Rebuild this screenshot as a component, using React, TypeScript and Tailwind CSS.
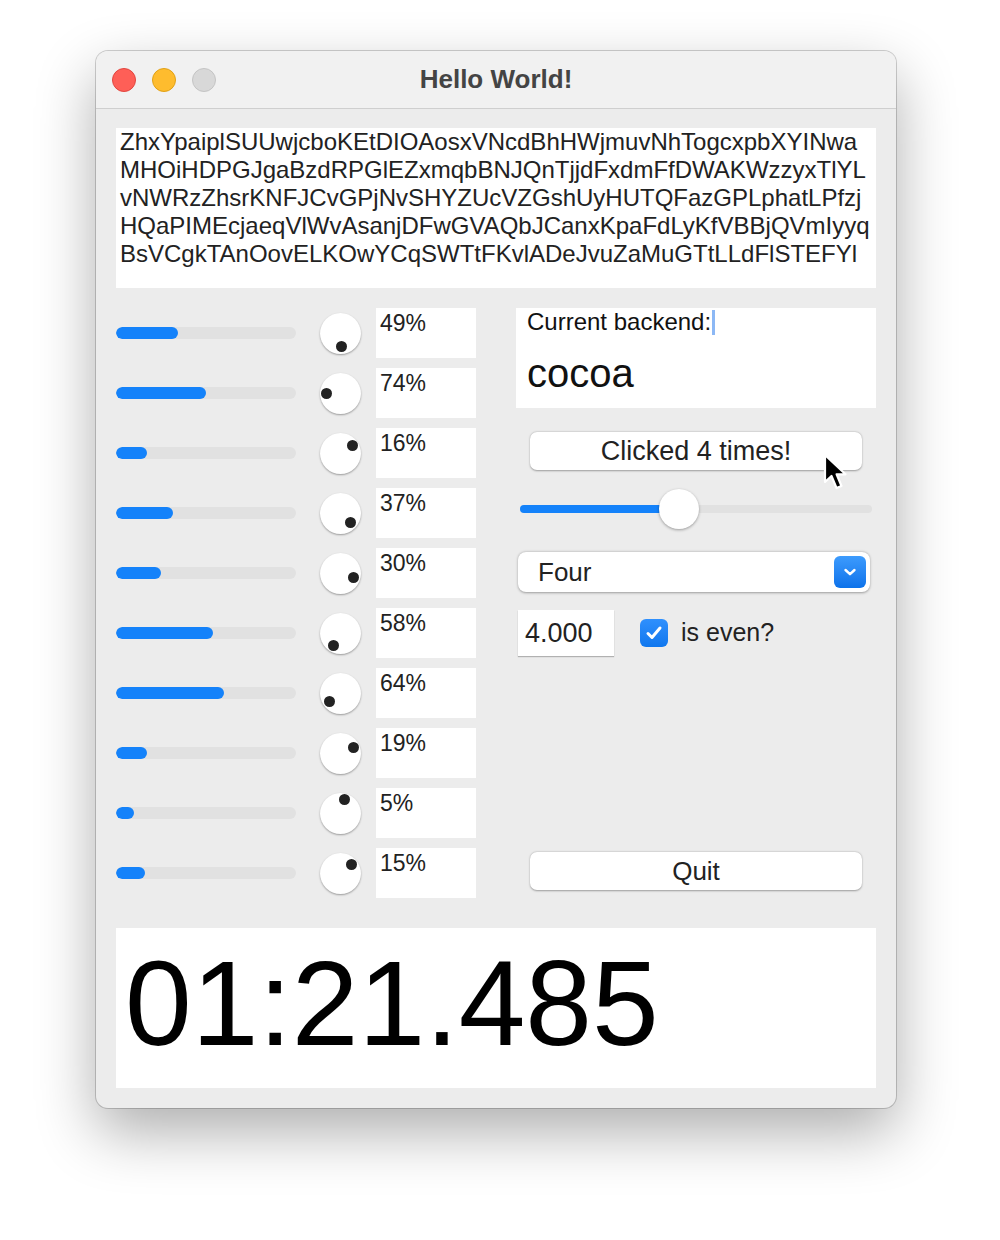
import React from 'react';

const font = { fontFamily: '"Liberation Sans", Arial, Helvetica, sans-serif' };

const rows = [
  { pct: 49, fill: 62 },
  { pct: 74, fill: 90 },
  { pct: 16, fill: 31 },
  { pct: 37, fill: 57 },
  { pct: 30, fill: 45 },
  { pct: 58, fill: 97 },
  { pct: 64, fill: 108 },
  { pct: 19, fill: 31 },
  { pct: 5, fill: 18 },
  { pct: 15, fill: 29 },
];

const lines = [
  'ZhxYpaiplSUUwjcboKEtDIOAosxVNcdBhHWjmuvNhTogcxpbXYINwa',
  'MHOiHDPGJgaBzdRPGlEZxmqbBNJQnTjjdFxdmFfDWAKWzzyxTlYL',
  'vNWRzZhsrKNFJCvGPjNvSHYZUcVZGshUyHUTQFazGPLphatLPfzj',
  'HQaPIMEcjaeqVlWvAsanjDFwGVAQbJCanxKpaFdLyKfVBBjQVmIyyq',
  'BsVCgkTAnOovELKOwYCqSWTtFKvlADeJvuZaMuGTtLLdFlSTEFYl',
];

function Knob({ pct }: { pct: number }) {
  const a = (pct / 100) * Math.PI * 2;
  const x = 20.5 + Math.sin(a) * 14;
  const y = 20.5 - Math.cos(a) * 14;
  return (
    <div className="relative w-[41px] h-[41px] rounded-full bg-white shadow-[0_1px_2px_rgba(0,0,0,0.35)] shrink-0">
      <div
        className="absolute w-[11px] h-[11px] rounded-full bg-[#222]"
        style={{ left: x - 5.5, top: y - 5.5 }}
      />
    </div>
  );
}

function Row({ pct, fill }: { pct: number; fill: number }) {
  return (
    <div className="flex items-center h-[50px]">
      <div className="w-[180px] h-[12px] rounded-full bg-[#e1e1e1] overflow-hidden">
        <div className="h-full rounded-full bg-[#1482fa]" style={{ width: fill }} />
      </div>
      <div className="ml-[24px]">
        <Knob pct={pct} />
      </div>
      <div className="ml-[15px] w-[100px] h-[50px] bg-white pl-[4px] pt-[2px] text-[23px] leading-[26px] text-[#222]">
        {pct}%
      </div>
    </div>
  );
}

function Cursor() {
  return (
    <svg
      className="absolute left-[293px] top-[21px]"
      width="28"
      height="40"
      viewBox="0 0 28 40"
    >
      <path
        d="M2 2 L2 29 L8.5 23 L13.5 35 L18.5 33 L13.6 21.3 L22.5 21.3 Z"
        fill="#000"
        stroke="#fff"
        strokeWidth="2.2"
        strokeLinejoin="round"
      />
    </svg>
  );
}

export default function App() {
  return (
    <div className="min-h-[1240px] bg-white pt-[51px] pl-[96px]" style={font}>
      <div className="w-[800px] h-[1057px] rounded-[12px] bg-[#ececec] shadow-[0_24px_60px_rgba(0,0,0,0.32),0_0_0_1px_rgba(0,0,0,0.18)] overflow-hidden flex flex-col">
        <div className="relative h-[58px] shrink-0 bg-[#f1f1f1] border-b border-[#cfcfcf] flex items-center">
          <div className="flex items-center gap-[16px] pl-[16px]">
            <div className="w-[24px] h-[24px] rounded-full bg-[#fe5f57] border border-[#e2463f]" />
            <div className="w-[24px] h-[24px] rounded-full bg-[#febc2e] border border-[#e1a116]" />
            <div className="w-[24px] h-[24px] rounded-full bg-[#d8d8d8] border border-[#c4c4c4]" />
          </div>
          <div className="absolute inset-0 flex items-center justify-center text-[26px] font-bold text-[#444] pointer-events-none">
            Hello World!
          </div>
        </div>

        <div className="flex flex-col px-[20px] pt-[19px] pb-[20px] flex-1">
          <div className="h-[160px] bg-white pl-[4px] text-[24px] leading-[28px] text-[#222] whitespace-nowrap overflow-hidden">
            {lines.map((l) => (
              <div key={l}>{l}</div>
            ))}
          </div>

          <div className="flex mt-[20px] gap-[40px]">
            <div className="flex flex-col gap-[10px] w-[360px]">
              {rows.map((r, i) => (
                <Row key={i} pct={r.pct} fill={r.fill} />
              ))}
            </div>

            <div className="flex flex-col w-[360px]">
              <div className="h-[100px] bg-white pl-[11px] pt-[1px] text-[#111]">
                <div className="flex items-center text-[24px] leading-[26px]">
                  <span>Current backend:</span>
                  <span className="w-[3px] h-[25px] bg-[#8cb8f5] ml-[1px]" />
                </div>
                <div className="text-[40px] leading-[46px] mt-[15px]">cocoa</div>
              </div>

              <div className="relative mt-[24px] ml-[14px] w-[332px]">
                <div className="h-[38px] rounded-[7px] bg-white shadow-[0_0.5px_2px_rgba(0,0,0,0.35)] flex items-center justify-center text-[27px] text-[#222]">
                  Clicked 4 times!
                </div>
                <Cursor />
              </div>

              <div className="relative mt-[19px] ml-[4px] w-[352px] h-[40px] flex items-center">
                <div className="w-full h-[8px] rounded-full bg-[#e1e1e1]">
                  <div className="h-full w-[160px] rounded-full bg-[#1482fa]" />
                </div>
                <div className="absolute left-[139px] top-0 w-[40px] h-[40px] rounded-full bg-white shadow-[0_1px_3px_rgba(0,0,0,0.35)]" />
              </div>

              <div className="mt-[23px] ml-[2px] w-[352px] h-[40px] rounded-[8px] bg-white shadow-[0_0.5px_2.5px_rgba(0,0,0,0.35)] flex items-center justify-between pl-[20px] pr-[4px]">
                <span className="text-[26px] text-[#222]">Four</span>
                <div className="w-[32px] h-[32px] rounded-[6px] bg-gradient-to-b from-[#3c9bfd] to-[#0b72ea] flex items-center justify-center">
                  <svg width="14" height="10" viewBox="0 0 14 10">
                    <path d="M2.5 3 L7 7.2 L11.5 3" fill="none" stroke="#fff" strokeWidth="2.4" strokeLinecap="round" strokeLinejoin="round" />
                  </svg>
                </div>
              </div>

              <div className="mt-[18px] ml-[2px] flex items-center">
                <div className="w-[96px] h-[46px] bg-white shadow-[0_1px_1px_rgba(0,0,0,0.25)] pl-[7px] flex items-center text-[27px] text-[#222]">
                  4.000
                </div>
                <div className="ml-[26px] w-[28px] h-[28px] rounded-[6px] bg-gradient-to-b from-[#2f90fd] to-[#0f77ee] flex items-center justify-center">
                  <svg width="18" height="16" viewBox="0 0 18 16">
                    <path d="M3 8.5 L7 12.5 L15 3" fill="none" stroke="#fff" strokeWidth="3" strokeLinecap="round" strokeLinejoin="round" />
                  </svg>
                </div>
                <span className="ml-[13px] text-[25px] text-[#222]">is even?</span>
              </div>

              <div className="flex-1" />

              <div className="mb-[8px] ml-[14px] w-[332px] h-[38px] rounded-[7px] bg-white shadow-[0_0.5px_2px_rgba(0,0,0,0.35)] flex items-center justify-center text-[26px] text-[#222]">
                Quit
              </div>
            </div>
          </div>

          <div className="mt-[30px] h-[160px] bg-white pl-[9px] pt-[15px] text-[120px] leading-[120px] text-black">
            01:21.485
          </div>
        </div>
      </div>
    </div>
  );
}
